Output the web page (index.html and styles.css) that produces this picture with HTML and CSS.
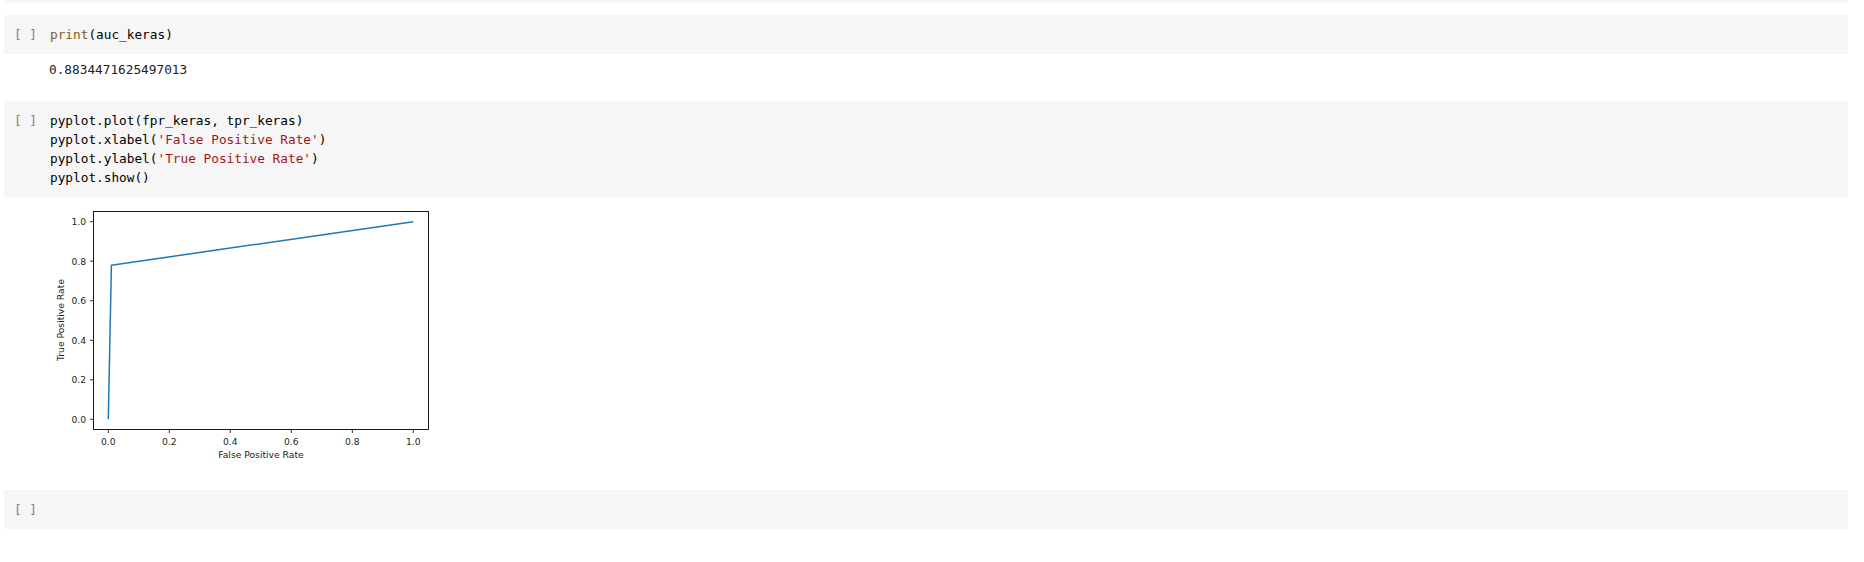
FILE: index.html
```html
<!DOCTYPE html>
<html>
<head>
<meta charset="utf-8">
<link rel="stylesheet" href="styles.css">
</head>
<body>
<div class="notebook">
  <div class="strip"></div>

  <div class="cell">
    <span class="gutter">[ ]</span>
    <div class="code">
      <div class="line"><span class="fn">print</span>(auc_keras)</div>
    </div>
  </div>
  <div class="output text-out">0.8834471625497013</div>

  <div class="cell">
    <span class="gutter">[ ]</span>
    <div class="code">
      <div class="line">pyplot.plot(fpr_keras, tpr_keras)</div>
      <div class="line">pyplot.xlabel(<span class="str">'False Positive Rate'</span>)</div>
      <div class="line">pyplot.ylabel(<span class="str">'True Positive Rate'</span>)</div>
      <div class="line">pyplot.show()</div>
    </div>
  </div>
  <div class="output plot-out">
    <svg class="plot" width="400" height="270" viewBox="0 0 400 270" xmlns="http://www.w3.org/2000/svg">
      <rect x="53.5" y="11.5" width="335" height="218" fill="#fff" stroke="#000" stroke-width="0.9"/>
      <polyline points="68.3,219.3 71.4,65.2 373.3,21.7" fill="none" stroke="#1f77b4" stroke-width="1.5" stroke-linejoin="round"/>
      <g stroke="#000" stroke-width="0.8">
        <line x1="50" y1="219.3" x2="53.5" y2="219.3"/>
        <line x1="50" y1="179.8" x2="53.5" y2="179.8"/>
        <line x1="50" y1="140.3" x2="53.5" y2="140.3"/>
        <line x1="50" y1="100.7" x2="53.5" y2="100.7"/>
        <line x1="50" y1="61.2" x2="53.5" y2="61.2"/>
        <line x1="50" y1="21.7" x2="53.5" y2="21.7"/>
        <line x1="68.3" y1="229.5" x2="68.3" y2="233"/>
        <line x1="129.3" y1="229.5" x2="129.3" y2="233"/>
        <line x1="190.3" y1="229.5" x2="190.3" y2="233"/>
        <line x1="251.3" y1="229.5" x2="251.3" y2="233"/>
        <line x1="312.3" y1="229.5" x2="312.3" y2="233"/>
        <line x1="373.3" y1="229.5" x2="373.3" y2="233"/>
      </g>
      <g class="tick" text-anchor="end">
        <text x="46" y="222.6">0.0</text>
        <text x="46" y="183.1">0.2</text>
        <text x="46" y="143.6">0.4</text>
        <text x="46" y="104">0.6</text>
        <text x="46" y="64.5">0.8</text>
        <text x="46" y="25">1.0</text>
      </g>
      <g class="tick" text-anchor="middle">
        <text x="68.3" y="245.2">0.0</text>
        <text x="129.3" y="245.2">0.2</text>
        <text x="190.3" y="245.2">0.4</text>
        <text x="251.3" y="245.2">0.6</text>
        <text x="312.3" y="245.2">0.8</text>
        <text x="373.3" y="245.2">1.0</text>
      </g>
      <text class="tick" x="221" y="257.6" text-anchor="middle">False Positive Rate</text>
      <text class="tick" x="0" y="0" text-anchor="middle" transform="translate(23.5 120) rotate(-90)">True Positive Rate</text>
    </svg>
  </div>

  <div class="cell">
    <span class="gutter">[ ]</span>
    <div class="code"></div>
  </div>
</div>
</body>
</html>
```

FILE: styles.css
```css
html, body {
  margin: 0;
  padding: 0;
  background: #ffffff;
}

.notebook {
  width: 1844px;
  margin-left: 4px;
  display: flex;
  flex-direction: column;
}

.strip {
  height: 3px;
  background: #f6f6f6;
  margin-bottom: 12px;
}

.cell {
  display: flex;
  align-items: flex-start;
  background: #f6f6f6;
  padding: 10px 0;
}

.gutter {
  width: 36px;
  padding-left: 10px;
  flex: none;
  font-family: "DejaVu Sans Mono", monospace;
  font-size: 12.75px;
  line-height: 19px;
  color: #808080;
  white-space: pre;
}

.code {
  display: flex;
  flex-direction: column;
  min-height: 19px;
  font-family: "DejaVu Sans Mono", monospace;
  font-size: 12.75px;
  line-height: 19px;
  color: #000000;
}

.line {
  height: 19px;
  white-space: pre;
}

.fn {
  color: #795e26;
}

.str {
  color: #a31515;
}

.output {
  padding-left: 45px;
}

.text-out {
  padding-top: 6px;
  padding-bottom: 22px;
  font-family: "DejaVu Sans Mono", monospace;
  font-size: 12.75px;
  line-height: 19px;
  color: #212121;
  white-space: pre;
}

.plot-out {
  height: 293px;
  padding-left: 36px;
}

.plot {
  display: block;
  margin-top: 3px;
}

.tick {
  font-family: "DejaVu Sans", sans-serif;
  font-size: 9.2px;
  fill: #222222;
}
```
